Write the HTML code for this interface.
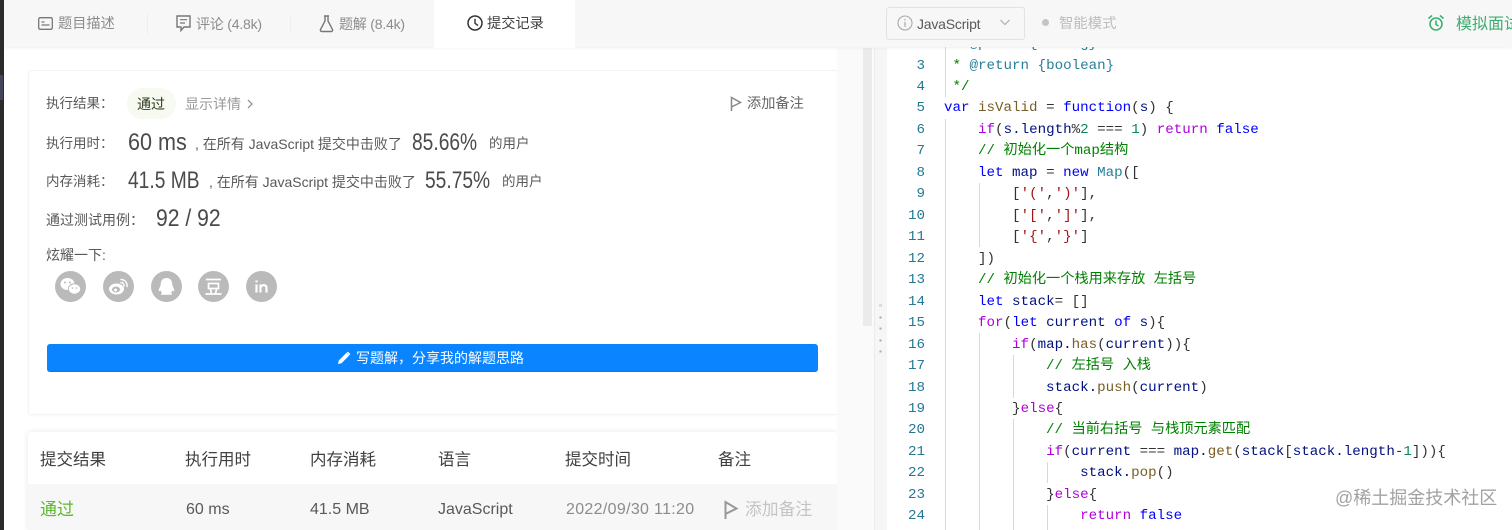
<!DOCTYPE html>
<html lang="zh"><head><meta charset="utf-8"><title>提交记录</title>
<style>
html,body{margin:0;padding:0;width:1512px;height:530px;overflow:hidden;background:#fff}
body{position:relative;font-family:"Liberation Sans","Noto Sans CJK SC",sans-serif;color:#595959}
.t{position:absolute;white-space:pre;line-height:20px}
.abs{position:absolute}
svg{position:absolute;overflow:visible}
.g{color:#8c8c8c}
.n{font-family:"Liberation Sans",sans-serif;color:#4a4a4a;font-size:24px;transform-origin:0 50%}
.c{position:absolute;left:944px;font:14.18px/21px "Liberation Mono","Noto Sans CJK SC",monospace;white-space:pre;color:#001080}
.ln{position:absolute;left:895px;width:30px;text-align:right;font:14.18px/21px "Liberation Mono",monospace;color:#237893}
.k{color:#0000ff}.p{color:#af00db}.m{color:#795e26}.d{color:#098658}.s{color:#a31515}.z{color:#008000}.y{color:#267f99}.b{color:#333}
.ig{position:absolute;width:1px;background:#d9d9d9}
.so{position:absolute;top:271px;width:31px;height:31px;border-radius:50%;background:#bababa}
.th{position:absolute;top:450px;font-size:16.5px;line-height:20px;color:#404040;white-space:pre}
.td{position:absolute;top:500px;font-size:16px;line-height:20px;color:#595959;white-space:pre}
</style></head><body>

<!-- left window edge -->
<div class="abs" style="left:0;top:0;width:4px;height:530px;background:#2b2b2b"></div>
<div class="abs" style="left:0;top:75px;width:3px;height:25px;background:#45455a"></div>

<!-- cards -->
<div class="abs" style="left:28px;top:70px;width:808px;height:343px;border:1px solid #f4f4f4;border-radius:3px;box-shadow:0 1px 3px rgba(0,0,0,.03)"></div>
<div class="abs" style="left:28px;top:432px;width:809px;height:98px;box-shadow:0 0 6px rgba(0,0,0,.1);background:#fff;border-radius:3px 3px 0 0"></div>
<div class="abs" style="left:28px;top:484px;width:809px;height:46px;background:#f7f7f7"></div>

<!-- result rows -->
<div class="t" style="left:46px;top:94px;font-size:13.5px;color:#595959">执行结果：</div>
<div class="abs" style="left:127px;top:88px;width:49px;height:31px;border-radius:16px;background:#f6faf1"></div>
<div class="t" style="left:137px;top:94px;font-size:14px;color:#2f3b1e">通过</div>
<div class="t g" style="left:185px;top:94px;font-size:14px;color:#9a9a9a">显示详情</div>
<svg style="left:247px;top:99px" width="6" height="10" viewBox="0 0 6 10"><path d="M1 1l4 4-4 4" fill="none" stroke="#888" stroke-width="1.2"/></svg>
<svg style="left:730px;top:96px" width="12" height="16" viewBox="0 0 12 16"><path d="M1.5 15V1.500L10.500 6.500 1.500 11" fill="none" stroke="#888" stroke-width="1.500"/></svg>
<div class="t" style="left:747px;top:94px;font-size:14.200px;color:#666">添加备注</div>

<div class="t" style="left:46px;top:134px;font-size:13.500px">执行用时：</div>
<div class="t n" style="left:128px;top:133px;transform:scaleX(.9)">60 ms</div>
<div class="t" style="left:195px;top:134px;font-size:14px">, 在所有 JavaScript 提交中击败了</div>
<div class="t n" style="left:412px;top:133px;transform:scaleX(.8)">85.66%</div>
<div class="t" style="left:489px;top:134px;font-size:13.500px">的用户</div>

<div class="t" style="left:46px;top:172px;font-size:13.500px">内存消耗：</div>
<div class="t n" style="left:128px;top:171px;transform:scaleX(.8)">41.5 MB</div>
<div class="t" style="left:209px;top:172px;font-size:14px">, 在所有 JavaScript 提交中击败了</div>
<div class="t n" style="left:425px;top:171px;transform:scaleX(.8)">55.75%</div>
<div class="t" style="left:502px;top:172px;font-size:13.500px">的用户</div>

<div class="t" style="left:46px;top:210px;font-size:14px">通过测试用例：</div>
<div class="t n" style="left:156px;top:209px;transform:scaleX(.88)">92 / 92</div>
<div class="t" style="left:46px;top:245px;font-size:14px">炫耀一下:</div>

<!-- social -->
<div class="so" style="left:55px"></div>
<svg style="left:55px;top:271px" width="31" height="31" viewBox="0 0 31 31"><ellipse cx="12.500" cy="13" rx="7" ry="6" fill="#fff"/><ellipse cx="19.500" cy="18" rx="6.200" ry="5.200" fill="#fff" stroke="#bababa" stroke-width="1"/><circle cx="10" cy="11.500" r="1" fill="#bababa"/><circle cx="15" cy="11.500" r="1" fill="#bababa"/><circle cx="17.500" cy="17" r=".8" fill="#bababa"/><circle cx="21.500" cy="17" r=".8" fill="#bababa"/></svg>
<div class="so" style="left:103px"></div>
<svg style="left:103px;top:271px" width="31" height="31" viewBox="0 0 31 31"><ellipse cx="13.500" cy="18" rx="7.500" ry="5.500" fill="#fff"/><ellipse cx="13" cy="18.500" rx="4" ry="3" fill="#bababa"/><circle cx="12.500" cy="19" r="1.500" fill="#fff"/><path d="M18 8.500a6 6 0 0 1 6 7M18 11.500a3 3 0 0 1 3 3.500" fill="none" stroke="#fff" stroke-width="1.400" stroke-linecap="round"/></svg>
<div class="so" style="left:151px"></div>
<svg style="left:151px;top:271px" width="31" height="31" viewBox="0 0 31 31"><path d="M15.500 7c-4 0-5.800 3-5.800 6.500 0 1.500-1.700 3.500-2 5.500-.2 1.500.8 1.500 2 .5.300 1 .8 2 1.500 2.500-1 .5-1.700 1.200-1.200 1.800h11c.5-.6-.2-1.300-1.200-1.800.7-.5 1.200-1.500 1.500-2.500 1.200 1 2.200 1 2-.5-.3-2-2-4-2-5.500C21.300 10 19.500 7 15.500 7z" fill="#fff"/></svg>
<div class="so" style="left:198px"></div>
<svg style="left:198px;top:271px" width="31" height="31" viewBox="0 0 31 31"><path d="M8 8.500h15M10.500 12.500h10v5h-10zM12.500 18.500l1 4M18.500 18.500l-1 4M7.500 23h16" fill="none" stroke="#fff" stroke-width="1.700"/></svg>
<div class="so" style="left:246px"></div>
<svg style="left:246px;top:271px" width="31" height="31" viewBox="0 0 31 31"><path d="M10.500 13.500v8M10.500 9.500v1.800M14.500 21.500v-8M14.500 16.500c1-3 6-3.500 6 .5v4.500" fill="none" stroke="#fff" stroke-width="2.200"/></svg>

<!-- button -->
<div class="abs" style="left:47px;top:344px;width:771px;height:27px;background:#0a84ff;border:1px solid #0b76e0;border-width:0 0 1px;border-radius:3px"></div>
<svg style="left:337px;top:351px" width="14" height="14" viewBox="0 0 14 14"><path d="M1 13l.8-3.500L9.500 1.800l2.700 2.700L4.500 12.200zM10.300 1l.7-.3 2.300 2.300-.3.700-.7.500L9.700 1.600z" fill="#fff"/></svg>
<div class="t" style="left:356px;top:348px;font-size:14px;color:#fff">写题解，分享我的解题思路</div>

<!-- table -->
<div class="th" style="left:40px">提交结果</div>
<div class="th" style="left:185px">执行用时</div>
<div class="th" style="left:310px">内存消耗</div>
<div class="th" style="left:438px">语言</div>
<div class="th" style="left:565px">提交时间</div>
<div class="th" style="left:718px">备注</div>
<div class="td" style="left:40px;color:#5cb82e;font-size:17px">通过</div>
<div class="td" style="left:186px">60 ms</div>
<div class="td" style="left:310px">41.5 MB</div>
<div class="td" style="left:438px">JavaScript</div>
<div class="td" style="left:566px;color:#8c8c8c;letter-spacing:.32px">2022/09/30 11:20</div>
<svg style="left:724px;top:500px" width="15" height="20" viewBox="0 0 15 20"><path d="M1.500 19V2L12.500 8.500 1.500 14" fill="none" stroke="#999" stroke-width="2"/></svg>
<div class="td" style="left:745px;color:#c4c4c4;font-size:16.800px">添加备注</div>

<!-- splitter / scrollbars -->
<div class="abs" style="left:837px;top:48px;width:50px;height:482px;background:#fafafa"></div>
<div class="abs" style="left:863px;top:48px;width:9px;height:278px;background:#ebebeb"></div>
<div class="abs" style="left:874px;top:48px;width:1px;height:482px;background:#ececec"></div>
<div class="abs" style="left:875px;top:48px;width:12px;height:482px;background:#f6f6f6"></div>
<div class="abs" style="left:880px;top:305px;width:1px;height:1px;box-shadow:0 0 0 .5px #aaa,0 12px 0 .5px #aaa,0 23px 0 .5px #aaa,0 35px 0 .5px #aaa,0 46px 0 .5px #aaa"></div>
<div class="abs" style="left:887px;top:48px;width:625px;height:482px;background:#fff"></div>

<!-- indent guides -->
<div class="ig" style="left:945px;top:40px;height:57px"></div>
<div class="ig" style="left:945px;top:119px;height:411px"></div>
<div class="ig" style="left:979px;top:183px;height:64px"></div>
<div class="ig" style="left:979px;top:333px;height:197px"></div>
<div class="ig" style="left:1013px;top:355px;height:43px"></div>
<div class="ig" style="left:1013px;top:419px;height:111px"></div>
<div class="ig" style="left:1047px;top:462px;height:21px"></div>
<div class="ig" style="left:1047px;top:505px;height:25px"></div>

<!-- code -->
<div class="abs" style="left:0;top:1px;width:1512px;height:529px">
<div class="ln" style="top:33px">2</div><div class="c z" style="top:33px"> * <span class="y">@param</span> <span class="y">{string}</span> <span class="b">s</span></div>
<div class="ln" style="top:55px">3</div><div class="c z" style="top:55px"> * <span class="y">@return</span> <span class="y">{boolean}</span></div>
<div class="ln" style="top:76px">4</div><div class="c z" style="top:76px"> */</div>
<div class="ln" style="top:97px">5</div><div class="c" style="top:97px"><span class="k">var</span> <span class="m">isValid</span> <span class="b">=</span> <span class="k">function</span><span class="b">(</span>s<span class="b">) {</span></div>
<div class="ln" style="top:119px">6</div><div class="c" style="top:119px">    <span class="p">if</span><span class="b">(</span>s.length<span class="b">%</span><span class="d">2</span> <span class="b">===</span> <span class="d">1</span><span class="b">)</span> <span class="p">return</span> <span class="k">false</span></div>
<div class="ln" style="top:140px">7</div><div class="c z" style="top:140px">    // 初始化一个map结构</div>
<div class="ln" style="top:162px">8</div><div class="c" style="top:162px">    <span class="k">let</span> map <span class="b">=</span> <span class="k">new</span> <span class="y">Map</span><span class="b">([</span></div>
<div class="ln" style="top:183px">9</div><div class="c" style="top:183px">        <span class="b">[</span><span class="s">'('</span><span class="b">,</span><span class="s">')'</span><span class="b">],</span></div>
<div class="ln" style="top:205px">10</div><div class="c" style="top:205px">        <span class="b">[</span><span class="s">'['</span><span class="b">,</span><span class="s">']'</span><span class="b">],</span></div>
<div class="ln" style="top:226px">11</div><div class="c" style="top:226px">        <span class="b">[</span><span class="s">'{'</span><span class="b">,</span><span class="s">'}'</span><span class="b">]</span></div>
<div class="ln" style="top:248px">12</div><div class="c b" style="top:248px">    ])</div>
<div class="ln" style="top:269px">13</div><div class="c z" style="top:269px">    // 初始化一个栈用来存放 左括号</div>
<div class="ln" style="top:291px">14</div><div class="c" style="top:291px">    <span class="k">let</span> stack<span class="b">= []</span></div>
<div class="ln" style="top:312px">15</div><div class="c" style="top:312px">    <span class="p">for</span><span class="b">(</span><span class="k">let</span> current <span class="k">of</span> s<span class="b">){</span></div>
<div class="ln" style="top:334px">16</div><div class="c" style="top:334px">        <span class="p">if</span><span class="b">(</span>map.<span class="m">has</span><span class="b">(</span>current<span class="b">)){</span></div>
<div class="ln" style="top:355px">17</div><div class="c z" style="top:355px">            // 左括号 入栈</div>
<div class="ln" style="top:377px">18</div><div class="c" style="top:377px">            stack.<span class="m">push</span><span class="b">(</span>current<span class="b">)</span></div>
<div class="ln" style="top:398px">19</div><div class="c" style="top:398px">        <span class="b">}</span><span class="p">else</span><span class="b">{</span></div>
<div class="ln" style="top:419px">20</div><div class="c z" style="top:419px">            // 当前右括号 与栈顶元素匹配</div>
<div class="ln" style="top:441px">21</div><div class="c" style="top:441px">            <span class="p">if</span><span class="b">(</span>current <span class="b">===</span> map.<span class="m">get</span><span class="b">(</span>stack<span class="b">[</span>stack.length<span class="b">-</span><span class="d">1</span><span class="b">])){</span></div>
<div class="ln" style="top:462px">22</div><div class="c" style="top:462px">                stack.<span class="m">pop</span><span class="b">()</span></div>
<div class="ln" style="top:484px">23</div><div class="c" style="top:484px">            <span class="b">}</span><span class="p">else</span><span class="b">{</span></div>
<div class="ln" style="top:505px">24</div><div class="c" style="top:505px">                <span class="p">return</span> <span class="k">false</span></div>
</div>

<div class="t" style="left:1335px;top:488px;font-size:18px;color:rgba(130,130,130,.75)">@稀土掘金技术社区</div>

<!-- header -->
<div class="abs" style="left:4px;top:0;width:1508px;height:47px;background:#f7f7f7;box-shadow:0 1px 3px rgba(0,0,0,.07)"></div>
<div class="abs" style="left:434px;top:0;width:141px;height:48px;background:#fff"></div>
<div class="abs" style="left:147px;top:14px;width:1px;height:20px;background:#eee"></div>
<div class="abs" style="left:290px;top:14px;width:1px;height:20px;background:#eee"></div>

<svg style="left:38px;top:17px" width="15" height="13" viewBox="0 0 15 13"><rect x=".7" y=".7" width="13.600" height="11.600" rx="1.500" fill="none" stroke="#777" stroke-width="1.300"/><path d="M3.500 5h3M3.500 8h8" stroke="#777" stroke-width="1.200"/></svg>
<div class="t" style="left:58px;top:14px;font-size:14.200px;color:#8c8c8c">题目描述</div>
<svg style="left:176px;top:15px" width="15" height="17" viewBox="0 0 15 17"><path d="M1 1h13v11H8l-3 3.500V12H1z" fill="none" stroke="#777" stroke-width="1.400"/><path d="M4 4.700h7M4 8h5" stroke="#777" stroke-width="1.200"/></svg>
<div class="t" style="left:196px;top:14px;font-size:14px;color:#8c8c8c;letter-spacing:-.2px">评论 (4.8k)</div>
<svg style="left:319px;top:15px" width="15" height="18" viewBox="0 0 15 18"><path d="M5 1h5M6 1v5L1.500 14.500c-.4 1 .2 2 1.300 2h9.400c1.100 0 1.700-1 1.300-2L9 6V1" fill="none" stroke="#777" stroke-width="1.400"/></svg>
<div class="t" style="left:339px;top:14px;font-size:14px;color:#8c8c8c;letter-spacing:-.2px">题解 (8.4k)</div>
<svg style="left:467px;top:15px" width="16" height="16" viewBox="0 0 16 16"><circle cx="8" cy="8" r="7" fill="none" stroke="#333" stroke-width="1.500"/><path d="M8 3.800V8.300L11 10.500" fill="none" stroke="#333" stroke-width="1.400"/></svg>
<div class="t" style="left:487px;top:14px;font-size:14.200px;color:#404040">提交记录</div>

<div class="abs" style="left:886px;top:7px;width:137px;height:31px;border:1px solid #e2e2e2;border-radius:3px;background:#f7f7f7"></div>
<svg style="left:897px;top:15px" width="16" height="16" viewBox="0 0 16 16"><circle cx="8" cy="8" r="7" fill="none" stroke="#aaa" stroke-width="1.100"/><path d="M8 7v5M8 4v1.500" stroke="#aaa" stroke-width="1.200"/></svg>
<div class="t" style="left:917px;top:14px;font-size:14px;color:#595959;letter-spacing:-.2px">JavaScript</div>
<svg style="left:1000px;top:19px" width="10" height="7" viewBox="0 0 10 7"><path d="M.5 1L5 5.500 9.500 1" fill="none" stroke="#aaa" stroke-width="1.100"/></svg>
<div class="abs" style="left:1042px;top:19px;width:7px;height:7px;border-radius:50%;background:#c4c4c4"></div>
<div class="t" style="left:1059px;top:14px;font-size:14.400px;color:#bdbdbd">智能模式</div>
<svg style="left:1427px;top:14px" width="18" height="18" viewBox="0 0 18 18"><circle cx="9" cy="10" r="6" fill="none" stroke="#3cb371" stroke-width="1.600"/><path d="M9 6.500V10.500L11.500 12M1.500 4.500L5 1.500M16.500 4.500L13 1.500" fill="none" stroke="#3cb371" stroke-width="1.600"/></svg>
<div class="t" style="left:1456px;top:15px;font-size:16px;color:#3cae6f">模拟面试</div>
</body></html>
